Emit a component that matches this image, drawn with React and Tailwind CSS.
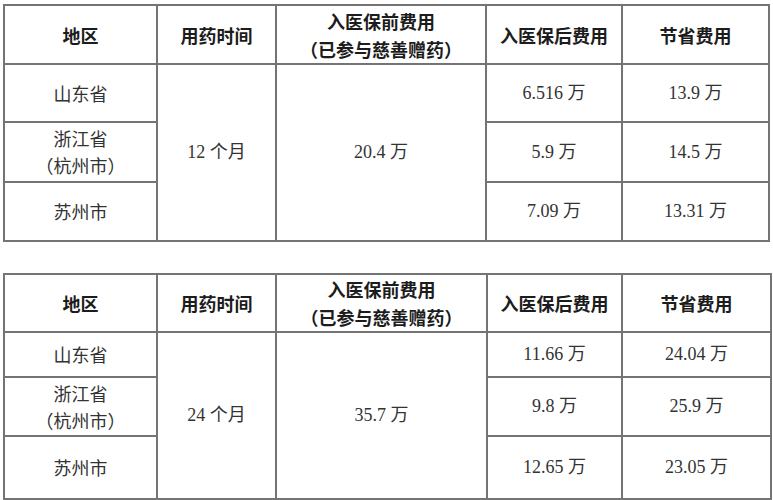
import React from 'react';

const tables = [
  {
    months: '12 个月',
    before: '20.4 万',
    width: 'w-[765px]',
    cols: ['w-[153px]', 'w-[119px]', 'w-[210px]', 'w-[136px]', 'w-[147px]'],
    rows: ['h-[59px]', 'h-[58px]', 'h-[60px]', 'h-[59px]'],
    data: [
      ['6.516 万', '13.9 万'],
      ['5.9 万', '14.5 万'],
      ['7.09 万', '13.31 万'],
    ],
  },
  {
    months: '24 个月',
    before: '35.7 万',
    width: 'w-[767px]',
    cols: ['w-[153px]', 'w-[119px]', 'w-[211px]', 'w-[135px]', 'w-[149px]'],
    rows: ['h-[58px]', 'h-[45px]', 'h-[59px]', 'h-[63px]'],
    data: [
      ['11.66 万', '24.04 万'],
      ['9.8 万', '25.9 万'],
      ['12.65 万', '23.05 万'],
    ],
  },
];

const base = 'border-2 border-[#747474] text-center align-middle text-[18px]';
const head = base + ' font-bold leading-[28px] text-[#1c1c1c]';
const cell = base + ' leading-[27px] text-[#333]';
const num = cell + ' font-["Liberation_Serif","Noto_Sans_CJK_SC",serif]';

// full-width parentheses kept at a full em, so the browser's trimming doesn't shrink them
function Paren({ children }) {
  return (
    <span className="whitespace-nowrap">
      <span className="inline-block w-[18px] text-right">（</span>
      {children}
      <span className="inline-block w-[18px] text-left">）</span>
    </span>
  );
}

function CostTable({ t }) {
  return (
    <table className={'table-fixed border-collapse ' + t.width}>
      <colgroup>
        {t.cols.map((c, i) => <col key={i} className={c} />)}
      </colgroup>
      <tbody>
        <tr className={t.rows[0]}>
          <th className={head}>地区</th>
          <th className={head}>用药时间</th>
          <th className={head}>入医保前费用<br /><Paren>已参与慈善赠药</Paren></th>
          <th className={head}>入医保后费用</th>
          <th className={head}>节省费用</th>
        </tr>
        <tr className={t.rows[1]}>
          <td className={cell}>山东省</td>
          <td className={num} rowSpan={3}>{t.months}</td>
          <td className={num} rowSpan={3}>{t.before}</td>
          <td className={num}>{t.data[0][0]}</td>
          <td className={num}>{t.data[0][1]}</td>
        </tr>
        <tr className={t.rows[2]}>
          <td className={cell}>浙江省<br /><Paren>杭州市</Paren></td>
          <td className={num}>{t.data[1][0]}</td>
          <td className={num}>{t.data[1][1]}</td>
        </tr>
        <tr className={t.rows[3]}>
          <td className={cell}>苏州市</td>
          <td className={num}>{t.data[2][0]}</td>
          <td className={num}>{t.data[2][1]}</td>
        </tr>
      </tbody>
    </table>
  );
}

export default function App() {
  return (
    <div className='w-[773px] h-[500px] bg-white pl-[3px] pt-[4px] flex flex-col gap-[31px] overflow-hidden font-["Noto_Sans_CJK_SC",sans-serif]'>
      {tables.map((t, i) => <CostTable key={i} t={t} />)}
    </div>
  );
}
